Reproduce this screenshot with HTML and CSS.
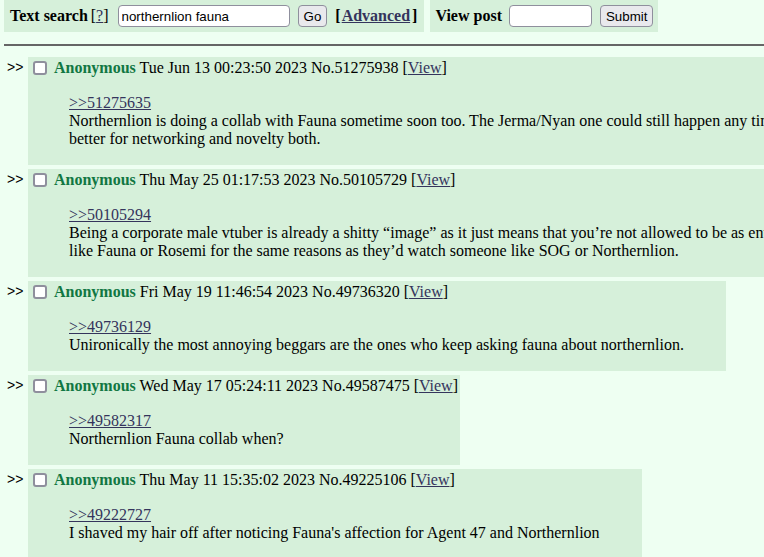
FILE: index.html
```html
<!DOCTYPE html>
<html lang="en">
<head>
<meta charset="UTF-8" />
<title>Search: northernlion fauna</title>
<link rel="stylesheet" href="styles.css">
</head>
<body>

<div class="topbar">
  <form class="box first">
    <b>Text search</b> <span class="help">[<a href="#">?</a>]</span>
    <input type="text" class="text-input wide" value="northernlion fauna" />
    <input type="submit" class="btn" value="Go" />
    <b class="advanced">[<a href="#">Advanced</a>]</b>
  </form>
  <form class="box">
    <b>View post</b>
    <input type="text" class="text-input narrow" />
    <input type="submit" class="btn" value="Submit" />
  </form>
</div>

<hr />

<div class="posts">
  <!-- results -->
  <div class="post">
    <div class="doubledash">&gt;&gt;</div>
    <div class="reply">
      <div class="post-head">
        <label><input type="checkbox" class="del" /> <span class="name">Anonymous</span> Tue Jun 13 00:23:50 2023</label>
        <span>No.51275938</span> [<a href="#">View</a>]
      </div>
      <blockquote>
        <a href="#" class="quotelink">&gt;&gt;51275635</a><br />
        Northernlion is doing a collab with Fauna sometime soon too. The Jerma/Nyan one could still happen any time, but this one will be<br />
        better for networking and novelty both.
      </blockquote>
    </div>
  </div>

  <div class="post">
    <div class="doubledash">&gt;&gt;</div>
    <div class="reply">
      <div class="post-head">
        <label><input type="checkbox" class="del" /> <span class="name">Anonymous</span> Thu May 25 01:17:53 2023</label>
        <span>No.50105729</span> [<a href="#">View</a>]
      </div>
      <blockquote>
        <a href="#" class="quotelink">&gt;&gt;50105294</a><br />
        Being a corporate male vtuber is already a shitty “image” as it just means that you’re not allowed to be as entertaining as the indies. People will watch someone<br />
        like Fauna or Rosemi for the same reasons as they’d watch someone like SOG or Northernlion.
      </blockquote>
    </div>
  </div>

  <div class="post">
    <div class="doubledash">&gt;&gt;</div>
    <div class="reply">
      <div class="post-head">
        <label><input type="checkbox" class="del" /> <span class="name">Anonymous</span> Fri May 19 11:46:54 2023</label>
        <span>No.49736320</span> [<a href="#">View</a>]
      </div>
      <blockquote>
        <a href="#" class="quotelink">&gt;&gt;49736129</a><br />
        Unironically the most annoying beggars are the ones who keep asking fauna about northernlion.
      </blockquote>
    </div>
  </div>

  <div class="post">
    <div class="doubledash">&gt;&gt;</div>
    <div class="reply">
      <div class="post-head">
        <label><input type="checkbox" class="del" /> <span class="name">Anonymous</span> Wed May 17 05:24:11 2023</label>
        <span>No.49587475</span> [<a href="#">View</a>]
      </div>
      <blockquote>
        <a href="#" class="quotelink">&gt;&gt;49582317</a><br />
        Northernlion Fauna collab when?
      </blockquote>
    </div>
  </div>

  <div class="post">
    <div class="doubledash">&gt;&gt;</div>
    <div class="reply">
      <div class="post-head">
        <label><input type="checkbox" class="del" /> <span class="name">Anonymous</span> Thu May 11 15:35:02 2023</label>
        <span>No.49225106</span> [<a href="#">View</a>]
      </div>
      <blockquote>
        <a href="#" class="quotelink">&gt;&gt;49222727</a><br />
        I shaved my hair off after noticing Fauna's affection for Agent 47 and Northernlion
      </blockquote>
    </div>
  </div>
</div>

</body>
</html>
```

FILE: styles.css
```css
html {
  overflow-x: hidden;
}
body {
  margin: 0;
  padding: 0 0 0 4px;
  background: #eefff2;
  color: #000;
  font-family: "Liberation Serif", "Times New Roman", serif;
  font-size: 16px;
}
a {
  color: #34345c;
}
.topbar {
  display: flex;
  gap: 6px;
}
.box {
  display: flex;
  align-items: center;
  height: 32px;
  padding: 0 5px;
  background: #d6f0da;
  white-space: nowrap;
}
.box.first {
  padding: 0 7px 0 6px;
}
.help {
  margin-left: 3px;
}
.text-input {
  box-sizing: border-box;
  height: 22px;
  padding: 1px 3px;
  border: 1px solid #8f8f9d;
  border-radius: 4px;
  background: #fff;
  font-family: "Liberation Sans", Arial, sans-serif;
  font-size: 13.33px;
  color: #000;
}
.wide {
  width: 172px;
  margin-left: 9px;
}
.narrow {
  width: 83px;
  margin-left: 7px;
}
.btn {
  box-sizing: border-box;
  height: 22px;
  margin-left: 8px;
  padding: 0 5px;
  border: 1px solid #8f8f9d;
  border-radius: 4px;
  background: #e9e9ed;
  font-family: "Liberation Sans", Arial, sans-serif;
  font-size: 13.33px;
  color: #000;
}
.advanced {
  margin-left: 8px;
}
.advanced a {
  margin: 0 2px 0 1px;
}
hr {
  margin: 12px 0 11px;
  border: 0;
  border-top: 2px solid #666;
  height: 0;
}
.posts {
  display: flex;
  flex-direction: column;
  gap: 4px;
}
.post {
  display: flex;
  align-items: flex-start;
  gap: 2px;
}
.doubledash {
  flex-shrink: 0;
  width: 22px;
  padding: 1px 0 0 3px;
  box-sizing: border-box;
  font-family: "Liberation Sans", Arial, sans-serif;
  font-size: 14px;
  line-height: 18px;
}
.reply {
  background: #d6f0da;
  padding: 0 2px 1px 1px;
  white-space: nowrap;
}
.post-head {
  line-height: 21px;
}
.name {
  color: #117743;
  font-weight: bold;
}
.del {
  appearance: none;
  box-sizing: border-box;
  width: 14px;
  height: 14px;
  margin: 0 3px 0 4px;
  vertical-align: -2px;
  border: 2px solid #8f8f9d;
  border-radius: 3px;
  background: #fff;
}
blockquote {
  margin: 16px 40px;
  line-height: 18px;
}
.quotelink {
  text-decoration: underline;
}
```
